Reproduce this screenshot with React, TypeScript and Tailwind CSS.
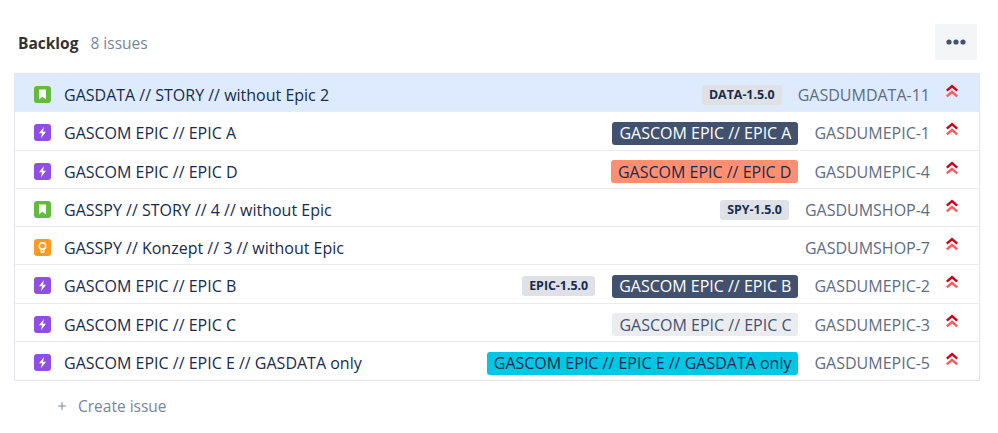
import { Plus } from 'lucide-react';

type IssueType = 'story' | 'epic' | 'idea';

interface Issue {
  title: string;
  type: IssueType;
  issueKey: string;
  version?: string;
  epic?: string;
  epicClass?: string;
  selected?: boolean;
}

const ISSUES: Issue[] = [
  { title: 'GASDATA // STORY // without Epic 2', type: 'story', issueKey: 'GASDUMDATA-11', version: 'DATA-1.5.0', selected: true },
  { title: 'GASCOM EPIC // EPIC A', type: 'epic', issueKey: 'GASDUMEPIC-1', epic: 'GASCOM EPIC // EPIC A', epicClass: 'bg-[#42526e] text-white' },
  { title: 'GASCOM EPIC // EPIC D', type: 'epic', issueKey: 'GASDUMEPIC-4', epic: 'GASCOM EPIC // EPIC D', epicClass: 'bg-[#ff8f73] text-[#172b4d]' },
  { title: 'GASSPY // STORY // 4 // without Epic', type: 'story', issueKey: 'GASDUMSHOP-4', version: 'SPY-1.5.0' },
  { title: 'GASSPY // Konzept // 3 // without Epic', type: 'idea', issueKey: 'GASDUMSHOP-7' },
  { title: 'GASCOM EPIC // EPIC B', type: 'epic', issueKey: 'GASDUMEPIC-2', version: 'EPIC-1.5.0', epic: 'GASCOM EPIC // EPIC B', epicClass: 'bg-[#42526e] text-white' },
  { title: 'GASCOM EPIC // EPIC C', type: 'epic', issueKey: 'GASDUMEPIC-3', epic: 'GASCOM EPIC // EPIC C', epicClass: 'bg-[#ebecf0] text-[#42526e]' },
  { title: 'GASCOM EPIC // EPIC E // GASDATA only', type: 'epic', issueKey: 'GASDUMEPIC-5', epic: 'GASCOM EPIC // EPIC E // GASDATA only', epicClass: 'bg-[#00c7e6] text-[#172b4d]' },
];

function TypeIcon({ type }: { type: IssueType }) {
  const bg = type === 'story' ? 'bg-[#63ba3c]' : type === 'epic' ? 'bg-[#904ee2]' : 'bg-[#ff991f]';
  return (
    <span className={`shrink-0 w-[17px] h-[17px] rounded-[3px] flex items-center justify-center ${bg}`}>
      <svg width="17" height="17" viewBox="0 0 17 17" fill="none">
        {type === 'story' && <path d="M5 3.6h7v9.8L8.5 10.8 5 13.4z" fill="#fff" />}
        {type === 'epic' && <path d="M10 3 5 9.2h3l-1 5L12 7.8H9z" fill="#fff" />}
        {type === 'idea' && (
          <g>
            <circle cx="8.5" cy="7" r="3.2" stroke="#fff" strokeWidth="1.5" />
            <path d="M7.2 10v3h2.6v-3" stroke="#fff" strokeWidth="1.3" />
          </g>
        )}
      </svg>
    </span>
  );
}

function PriorityIcon() {
  return (
    <svg className="shrink-0 -mt-[7px]" width="14" height="16" viewBox="0 0 14 16" fill="none">
      <path d="M1.8 7.6 7 3l5.2 4.6" stroke="#d0021b" strokeWidth="2.4" />
      <path d="M1.8 13.4 7 8.8l5.2 4.6" stroke="#ff5a5a" strokeWidth="2.4" />
    </svg>
  );
}

function IssueRow({ issue }: { issue: Issue }) {
  return (
    <div
      className={`h-[38.25px] pt-[4px] flex items-center pl-[19px] pr-[20px] border-b-[1.5px] border-[#e9ebef] last:border-b-0 ${
        issue.selected ? 'bg-[#deebff]' : 'bg-white'
      }`}
    >
      <TypeIcon type={issue.type} />
      <span className="ml-[13px] pt-[1px] flex-1 min-w-0 truncate text-[#172b4d]">{issue.title}</span>
      {issue.version && (
        <span className="shrink-0 mt-[1px] h-[20px] px-[7px] flex items-center rounded-[3px] bg-[#dfe1e6] text-[12.4px] font-bold text-[#172b4d]">
          {issue.version}
        </span>
      )}
      {issue.epic && (
        <span className={`shrink-0 mt-[1px] ml-[17px] h-[23px] px-[7px] flex items-center rounded-[3px] ${issue.epicClass}`}>
          {issue.epic}
        </span>
      )}
      <span className="shrink-0 ml-[16px] pt-[1px] text-[#5e6c84]">{issue.issueKey}</span>
      <span className="ml-[15px] flex">
        <PriorityIcon />
      </span>
    </div>
  );
}

export default function App() {
  return (
    <div className="w-[998px] h-[433px] bg-white text-[16px] font-['Open_Sans','Noto_Sans',sans-serif] overflow-hidden">
      <div className="pt-[24px] pl-[18px] pr-[21px] h-[73px] flex items-start justify-between">
        <div className="h-[39px] flex items-center">
          <span className="font-bold text-[#333333] text-[15.5px]">Backlog</span>
          <span className="ml-[12px] text-[#7a869a] text-[15.5px]">8 issues</span>
        </div>
        <button className="w-[42px] h-[36px] rounded-[3px] bg-[#f4f5f7] flex items-center justify-center">
          <svg width="20" height="6" viewBox="0 0 20 6" fill="#42526e">
            <circle cx="3" cy="3" r="2.6" />
            <circle cx="10" cy="3" r="2.6" />
            <circle cx="17" cy="3" r="2.6" />
          </svg>
        </button>
      </div>
      <div className="ml-[14px] mr-[18px] border border-[#e4e6eb] flex flex-col">
        {ISSUES.map((issue) => (
          <IssueRow key={issue.issueKey} issue={issue} />
        ))}
      </div>
      <div className="mt-[13px] pl-[56px] flex items-center text-[15.5px] text-[#7a869a]">
        <Plus size={12} />
        <span className="ml-[10px] pt-[1px]">Create issue</span>
      </div>
    </div>
  );
}
